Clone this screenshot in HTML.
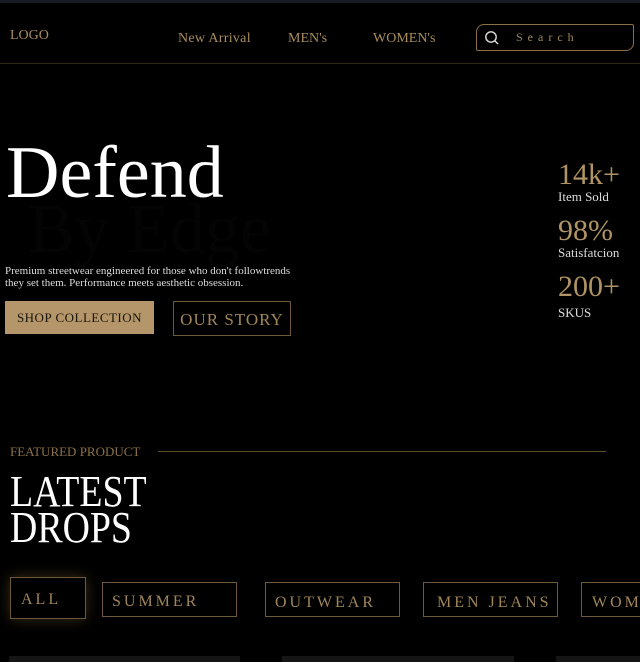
<!DOCTYPE html>
<html><head><meta charset="utf-8"><style>
*{margin:0;padding:0;box-sizing:border-box}
body{width:640px;height:662px;background:#000;overflow:hidden;position:relative;font-family:"Liberation Serif",serif;color:#b09464}
.a{position:absolute;white-space:nowrap}
.btn{position:absolute;border:1px solid #6e5a3a;color:#a0865a;letter-spacing:3px;font-size:16px}
</style></head><body>
<div class="a" style="left:0;top:0;width:640px;height:3px;background:#171b23"></div>
<div class="a" style="left:0;top:63px;width:640px;height:1px;background:#2e2718"></div>
<div class="a" style="left:10px;top:28px;font-size:14px;color:#a88c5c">LOGO</div>
<div class="a" style="left:178px;top:31px;font-size:14px;letter-spacing:.3px;color:#a88c5c">New Arrival</div>
<div class="a" style="left:288px;top:31px;font-size:14px;color:#a88c5c">MEN's</div>
<div class="a" style="left:373px;top:31px;font-size:14px;color:#a88c5c">WOMEN's</div>
<div class="a" style="left:476px;top:24px;width:158px;height:27px;border:1px solid #8a7045;border-radius:8px 2px 8px 2px"></div>
<svg class="a" style="left:484px;top:30px" width="16" height="16" viewBox="0 0 16 16"><circle cx="7" cy="7" r="5.2" fill="none" stroke="#ddd" stroke-width="1.4"/><line x1="11" y1="11" x2="14" y2="14" stroke="#ddd" stroke-width="1.4"/></svg>
<div class="a" style="left:516px;top:30px;font-size:12px;letter-spacing:5px;color:#a08a60">Search</div>

<div class="a" style="left:28px;top:192px;font-size:70px;line-height:76px;color:#040404">By Edge</div>
<div class="a" style="left:6px;top:133px;font-size:74px;line-height:80px;color:#fff">Defend</div>
<div class="a" style="left:5px;top:265px;font-size:11px;line-height:12px;color:#ddd">Premium streetwear engineered for those who don't followtrends<br>they set them. Performance meets aesthetic obsession.</div>
<div class="a" style="left:5px;top:301px;width:149px;height:33px;background:#b4966a;color:#1a1408;font-size:13px;letter-spacing:.5px;line-height:33px;text-align:center">SHOP COLLECTION</div>
<div class="btn" style="left:173px;top:301px;width:118px;height:35px;line-height:35px;text-align:center;letter-spacing:1px;font-size:17px">OUR STORY</div>

<div class="a" style="left:558px;top:158px;font-size:30px;line-height:34px">14k+</div>
<div class="a" style="left:558px;top:189px;font-size:13px;color:#ddd">Item Sold</div>
<div class="a" style="left:558px;top:214px;font-size:30px;line-height:34px">98%</div>
<div class="a" style="left:558px;top:245px;font-size:13px;color:#ddd">Satisfatcion</div>
<div class="a" style="left:558px;top:270px;font-size:30px;line-height:34px">200+</div>
<div class="a" style="left:558px;top:305px;font-size:13px;color:#ddd">SKUS</div>

<div class="a" style="left:10px;top:444px;font-size:13px;color:#8c7248">FEATURED PRODUCT</div>
<div class="a" style="left:158px;top:451px;width:448px;height:1px;background:#5e4c2e"></div>
<div class="a" style="left:10px;top:474px;font-size:44px;line-height:36px;color:#fff;transform:scaleX(.86);transform-origin:left">LATEST<br>DROPS</div>

<div class="btn" style="left:10px;top:577px;width:76px;height:42px;line-height:44px;padding-left:10px;box-shadow:0 0 14px rgba(160,130,70,.35)">ALL</div>
<div class="btn" style="left:102px;top:582px;width:135px;height:35px;line-height:37px;padding-left:9px">SUMMER</div>
<div class="btn" style="left:265px;top:582px;width:135px;height:35px;line-height:39px;padding-left:9px">OUTWEAR</div>
<div class="btn" style="left:423px;top:582px;width:135px;height:35px;line-height:39px;padding-left:13px">MEN JEANS</div>
<div class="btn" style="left:581px;top:582px;width:80px;height:35px;line-height:39px;padding-left:10px">WOMEN</div>

<div class="a" style="left:9px;top:656px;width:231px;height:6px;background:#151515"></div>
<div class="a" style="left:282px;top:656px;width:232px;height:6px;background:#151515"></div>
<div class="a" style="left:556px;top:656px;width:84px;height:6px;background:#151515"></div>
</body></html>
